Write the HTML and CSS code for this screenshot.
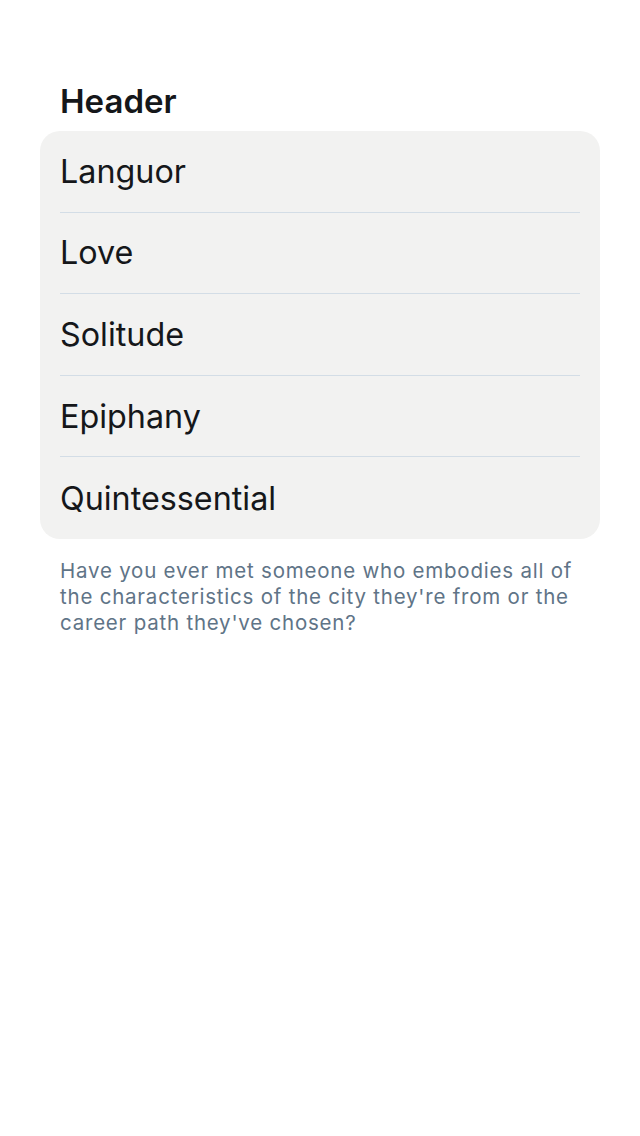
FILE: index.html
```html
<!DOCTYPE html>
<html>
<head>
<meta charset="utf-8">
<link rel="stylesheet" href="styles.css">
</head>
<body>
<div class="page">
  <section class="group">
    <h2 class="group-header">Header</h2>
    <ul class="list">
      <li class="row"><span class="row-text">Languor</span></li>
      <li class="row"><span class="row-text">Love</span></li>
      <li class="row"><span class="row-text">Solitude</span></li>
      <li class="row"><span class="row-text">Epiphany</span></li>
      <li class="row"><span class="row-text">Quintessential</span></li>
    </ul>
    <p class="group-footer">Have you ever met someone who embodies all of the characteristics of the city they're from or the career path they've chosen?</p>
  </section>
</div>
</body>
</html>
```

FILE: styles.css
```css
* { box-sizing: border-box; }
html, body {
  margin: 0;
  padding: 0;
  background: #ffffff;
  font-family: Inter, "Noto Sans", sans-serif;
}
.page {
  padding: 80px 40px 0 40px;
}
.group-header {
  margin: 0 0 9px 20px;
  font-size: 33px;
  font-weight: 600;
  line-height: 42px;
  color: #15171a;
}
.list {
  list-style: none;
  margin: 0;
  padding: 0 20px;
  background: #f2f2f1;
  border-radius: 20px;
}
.row {
  height: 81.6px;
  display: flex;
  align-items: center;
  border-bottom: 1px solid #d3dde6;
}
.row:last-child { border-bottom: none; }
.row-text {
  font-size: 32.3px;
  color: #15171a;
}
.group-footer {
  margin: 19px 20px 0 20px;
  font-size: 20.5px;
  line-height: 26px;
  letter-spacing: 0.78px;
  color: #5f7487;
}
```
